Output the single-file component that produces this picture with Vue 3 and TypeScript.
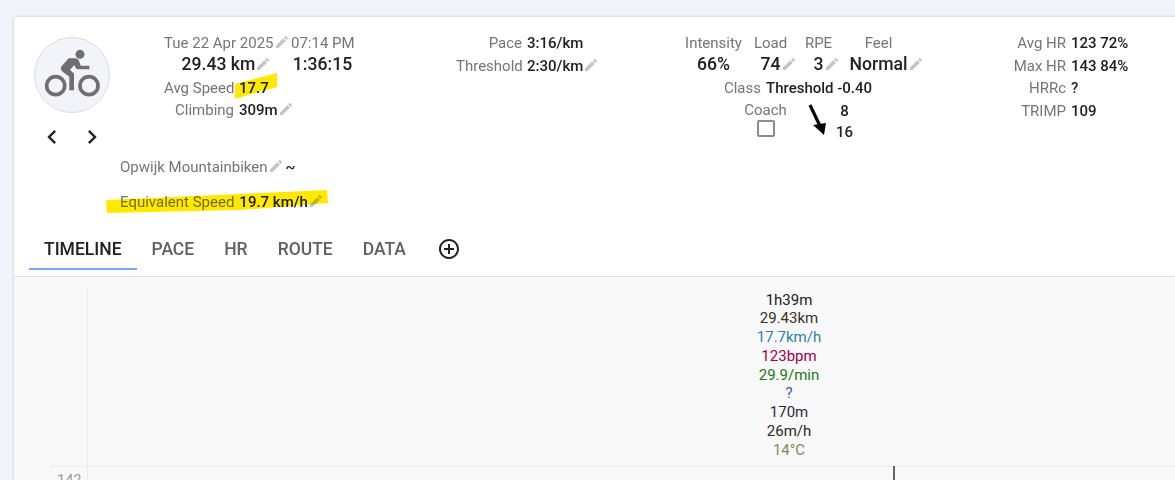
<script setup lang="ts">
const pencil = 'M3 17.25V21h3.75L17.81 9.94l-3.75-3.75L3 17.25zM20.71 7.04c.39-.39.39-1.02 0-1.41l-2.34-2.34c-.39-.39-1.02-.39-1.41 0l-1.83 1.83 3.75 3.75 1.83-1.83z'
const tabs = ['TIMELINE', 'PACE', 'HR', 'ROUTE', 'DATA']
const hrRows = [
  { label: 'Avg HR', value: '123 72%' },
  { label: 'Max HR', value: '143 84%' },
  { label: 'HRRc', value: '?' },
  { label: 'TRIMP', value: '109' },
]
const summary = [
  { text: '1h39m', color: '#212121' },
  { text: '29.43km', color: '#3a3028' },
  { text: '17.7km/h', color: '#2f7fa8' },
  { text: '123bpm', color: '#a00050' },
  { text: '29.9/min', color: '#1b7a1b' },
  { text: '?', color: '#1f5fae' },
  { text: '170m', color: '#2a2a35' },
  { text: '26m/h', color: '#33261e' },
  { text: '14°C', color: '#8a8a55' },
]
</script>

<template>
  <div class="page">
    <main class="card">
      <section class="head">
        <div class="side">
          <div class="avatar">
            <svg viewBox="0 0 192 180" width="64" height="60">
              <circle cx="120" cy="28" r="13.5" fill="#6f6f6f"/>
              <circle cx="47" cy="122" r="27" fill="none" stroke="#6f6f6f" stroke-width="11"/>
              <circle cx="147" cy="122" r="27" fill="none" stroke="#6f6f6f" stroke-width="11"/>
              <path fill="#6f6f6f" d="M86 40H108Q116 42 118 50L122 62H148V73H112Q108 73 106 67L103 60L90 74L102 86V136H88V95L68 80Q58 71 66 62Z"/>
            </svg>
          </div>
          <div class="nav">
            <svg viewBox="0 0 24 24" width="28" height="28"><path fill="#212121" d="M15.41 7.41 14 6l-6 6 6 6 1.41-1.41L10.83 12z"/></svg>
            <svg viewBox="0 0 24 24" width="28" height="28"><path fill="#212121" d="M10 6 8.59 7.41 13.17 12l-4.58 4.59L10 18l6-6z"/></svg>
          </div>
        </div>

        <div class="stats">
          <div class="when">
            <span class="lab">Tue 22 Apr 2025<svg class="pen" viewBox="0 0 24 24"><path :d="pencil"/></svg></span>
            <span class="lab">07:14 PM</span>
            <span class="big">29.43 km<svg class="pen" viewBox="0 0 24 24"><path :d="pencil"/></svg></span>
            <span class="big">1:36:15</span>
          </div>
          <div class="pair p-first"><span class="lab">Avg Speed</span><span class="val">17.7</span>
            <svg class="mark mark-a" viewBox="0 0 44 28"><polygon points="0,12 42,1 42,15 20,21 0,27" fill="#ffe900"/></svg>
          </div>
          <div class="pair"><span class="lab">Climbing</span><span class="val">309m<svg class="pen" viewBox="0 0 24 24"><path :d="pencil"/></svg></span></div>
        </div>

        <div class="pace">
          <div class="pair"><span class="lab">Pace</span><span class="val">3:16/km</span></div>
          <div class="pair"><span class="lab">Threshold</span><span class="val">2:30/km<svg class="pen" viewBox="0 0 24 24"><path :d="pencil"/></svg></span></div>
        </div>

        <div class="load">
          <div class="metrics">
            <div class="metric m-int"><span class="lab">Intensity</span><span class="big">66%</span></div>
            <div class="metric m-load"><span class="lab">Load</span><span class="big">74<span class="ghost"><svg class="pen" viewBox="0 0 24 24"><path :d="pencil"/></svg></span></span></div>
            <div class="metric m-rpe"><span class="lab">RPE</span><span class="big">3<span class="ghost"><svg class="pen" viewBox="0 0 24 24"><path :d="pencil"/></svg></span></span></div>
            <div class="metric m-feel"><span class="lab">Feel</span><span class="big">Normal<span class="ghost"><svg class="pen" viewBox="0 0 24 24"><path :d="pencil"/></svg></span></span></div>
          </div>
          <div class="pair p-class"><span class="lab">Class</span><span class="val">Threshold -0.40</span></div>
          <div class="coach-row">
            <div class="coach"><span class="lab">Coach</span><span class="check"></span></div>
            <svg class="arrow" viewBox="0 0 20 32" width="20" height="32"><path d="M2 1 L12 22" stroke="#000" stroke-width="3.2" fill="none"/><polygon points="5,21 18,19 16,31" fill="#000"/></svg>
            <div class="nums"><span>8</span><span>16</span></div>
          </div>
        </div>

        <div class="hr">
          <div v-for="r in hrRows" :key="r.label" class="pair"><span class="lab">{{ r.label }}</span><span class="val">{{ r.value }}</span></div>
        </div>
      </section>

      <div class="place"><span class="lab">Opwijk Mountainbiken<svg class="pen" viewBox="0 0 24 24"><path :d="pencil"/></svg></span><span class="tilde">~</span></div>
      <div class="equiv">
        <span class="lab">Equivalent Speed</span><span class="val">19.7 km/h<svg class="pen" viewBox="0 0 24 24"><path :d="pencil"/></svg></span>
        <svg class="mark mark-b" viewBox="0 0 222 24"><polygon points="0,10 221,0 222,13 134,20 1,23" fill="#ffe900"/></svg>
      </div>

      <nav class="tabs">
        <a v-for="(t, i) in tabs" :key="t" class="tab" :class="{ active: i === 0 }">{{ t }}</a>
        <svg class="plus" viewBox="0 0 24 24" width="24" height="24"><path fill="#212121" d="M13 7h-2v4H7v2h4v4h2v-4h4v-2h-4V7zm-1-5C6.49 2 2 6.49 2 12s4.49 10 10 10 10-4.49 10-10S17.51 2 12 2zm0 18c-4.41 0-8-3.59-8-8s3.59-8 8-8 8 3.59 8 8-3.59 8-8 8z"/></svg>
      </nav>

      <section class="chart">
        <span class="axis-y"></span>
        <div class="summary">
          <div v-for="s in summary" :key="s.text" class="sline" :style="{ color: s.color }">{{ s.text }}</div>
        </div>
        <div class="grid-line"><span class="tick-label">142</span><span class="cursor"></span></div>
      </section>
    </main>
  </div>
</template>

<style>
html, body { margin: 0; height: 480px; overflow: hidden; background: #f3f3fa; }
</style>

<style scoped>
.page {
  height: 480px;
  overflow: hidden;
  padding: 17px 0 0 14px;
  box-sizing: border-box;
  font-family: Roboto, "Liberation Sans", sans-serif;
  font-size: 15px;
  line-height: 22.5px;
  color: #212121;
}
.card {
  background: #fff;
  border-radius: 4px 0 0 0;
  box-shadow: 0 0 3px rgba(0, 0, 0, .22);
  height: 600px;
}
.head {
  display: grid;
  grid-template-columns: 150px 292px 229px 328px 1fr;
  height: 128px;
  padding-top: 15px;
  box-sizing: border-box;
}
.side { padding: 5px 0 0 20px; }
.avatar {
  width: 76px;
  height: 76px;
  border-radius: 50%;
  box-sizing: border-box;
  border: 1px solid #dcdcdc;
  background: #f3f3fa;
  display: flex;
  align-items: center;
  justify-content: center;
}
.nav { display: flex; gap: 12px; margin: 10px 0 0 4px; }
.lab { color: #757575; }
.val { font-weight: 500; }
.big { font-size: 17.6px; font-weight: 500; }
.pen { width: 16px; height: 16px; fill: #c4c4c4; vertical-align: -2px; }
.ghost { display: inline-block; width: 0; }
.when {
  display: grid;
  grid-template-columns: 125px 63px;
  column-gap: 2px;
  text-align: center;
  white-space: nowrap;
}
.when .lab:first-child { text-align: left; }
.when .big { line-height: 18px; padding-bottom: 2px; }
.pair { display: flex; gap: 5px; position: relative; white-space: nowrap; }
.pair .lab { text-align: right; flex: none; }
.stats .pair .lab { width: 70px; }
.p-first { margin-top: 2px; }
.pace .pair .lab { width: 66px; }
.hr .pair .lab { width: 53px; }
.load { display: flex; flex-direction: column; }
.metrics { display: flex; gap: 18px; height: 45px; }
.metric { display: flex; flex-direction: column; align-items: center; }
.metric .big { line-height: 18px; }
.m-int { width: 57px; margin-right: -6px; }
.m-load { width: 33px; }
.m-rpe { width: 27px; }
.m-feel { width: 57px; }
.p-class .lab { width: 76px; }
.coach-row { display: flex; margin: -1px 0 0 59px; }
.coach { display: flex; flex-direction: column; align-items: center; width: 43px; }
.check {
  width: 14px;
  height: 13px;
  border: 2px solid #8c8c8c;
  border-radius: 2px;
  margin-top: -1px;
}
.arrow { margin: 5px 0 0 21px; }
.nums {
  display: flex;
  flex-direction: column;
  align-items: center;
  width: 17px;
  margin: 2px 0 0 8px;
  font-weight: 500;
  line-height: 21px;
}
.place {
  margin: 11px 0 0 106px;
  display: flex;
  gap: 2px;
}
.tilde { font-weight: 500; }
.equiv {
  position: relative;
  margin: 12px 0 0 106px;
  display: flex;
  gap: 5px;
}
.mark { position: absolute; mix-blend-mode: multiply; }
.mark-a { left: 71px; top: -4.5px; width: 44px; height: 28px; }
.mark-b { left: -14px; top: -1px; width: 222px; height: 24px; }
.tabs {
  display: flex;
  align-items: flex-start;
  height: 49.5px;
  margin-top: 13px;
  padding-left: 15px;
  border-bottom: 1px solid #e0e0e0;
}
.tab {
  font-size: 17.5px;
  font-weight: 500;
  color: #616161;
  padding: 0 15px;
  height: 44px;
  line-height: 47px;
  box-sizing: border-box;
  border-bottom: 2px solid transparent;
}
.tab.active { color: #212121; border-bottom-color: #7aa7f2; }
.plus { margin: 10.5px 0 0 16px; }
.chart {
  position: relative;
  background: #f8f8f8;
  height: 300px;
  padding-top: 14px;
}
.axis-y {
  position: absolute;
  left: 73px;
  top: 11px;
  bottom: 0;
  width: 1px;
  background: #e9e9e9;
}
.summary { margin-left: 675px; width: 200px; text-align: center; line-height: 18.75px; }
.grid-line {
  position: relative;
  margin: 7px 0 0 36px;
  height: 1px;
  background: #ececec;
}
.tick-label {
  position: absolute;
  left: 7px;
  top: 7px;
  font-size: 14.5px;
  color: #9a9a9a;
  line-height: 16px;
}
.cursor {
  position: absolute;
  left: 843px;
  top: 0;
  width: 1.5px;
  height: 60px;
  background: #666;
}
</style>
